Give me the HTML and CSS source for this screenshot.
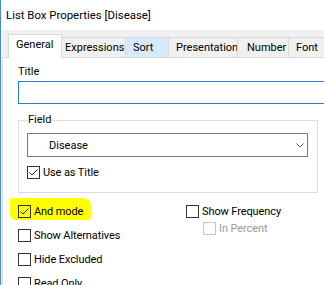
FILE: index.html
```html
<!DOCTYPE html>
<html lang="en">
<head>
    <meta charset="UTF-8">
    <meta name="viewport" content="width=device-width, initial-scale=1.0">
    <title>List Box Properties [Disease]</title>
    <link rel="stylesheet" href="styles.css">
</head>
<body>
    <div class="window">
        <div class="titlebar">List Box Properties [Disease]</div>

        <div class="tabs">
            <div class="tab active">General</div>
            <div class="tab tab-expr">Expressions</div>
            <div class="tab tab-sort hover">Sort</div>
            <div class="tab tab-pres">Presentation</div>
            <div class="tab tab-num">Number</div>
            <div class="tab tab-font">Font</div>
        </div>

        <div class="panel">
            <div class="label">Title</div>
            <div class="textbox"></div>

            <fieldset class="group">
                <legend>Field</legend>
                <div class="select">
                    <span>Disease</span>
                    <svg width="8" height="5" viewBox="0 0 8 5"><path d="M0.5 0.5 L4 4 L7.5 0.5" fill="none" stroke="#555"/></svg>
                </div>
                <div class="check use-title">
                    <span class="box"><svg width="11" height="11" viewBox="0 0 11 11"><path d="M1.5 5.5 L4 8 L9.5 2.5" fill="none" stroke="#222"/></svg></span>
                    Use as Title
                </div>
            </fieldset>

            <div class="options">
                <div class="col col-left">
                    <div class="check hl">
                        <span class="box"><svg width="11" height="11" viewBox="0 0 11 11"><path d="M1.5 5.5 L4 8 L9.5 2.5" fill="none" stroke="#222"/></svg></span>
                        And mode
                    </div>
                    <div class="check"><span class="box"></span>Show Alternatives</div>
                    <div class="check"><span class="box"></span>Hide Excluded</div>
                    <div class="check"><span class="box"></span>Read Only</div>
                </div>
                <div class="col col-right">
                    <div class="check"><span class="box"></span>Show Frequency</div>
                    <div class="check sub disabled"><span class="box"></span>In Percent</div>
                </div>
            </div>
        </div>
    </div>
</body>
</html>
```

FILE: styles.css
```css
* {
    box-sizing: border-box;
}
body {
    margin: 0;
    width: 324px;
    height: 285px;
    overflow: hidden;
    background-color: #f0f0f0;
    font-family: Roboto, "Segoe UI", sans-serif;
    font-size: 11px;
    color: #000;
}
.window {
    height: 285px;
    border-left: 1px solid #4a8bd0;
}
.titlebar {
    height: 30px;
    background-color: #fff;
    padding: 8px 0 0 5px;
    font-size: 11.4px;
    line-height: 15px;
}
.tabs {
    display: flex;
    align-items: flex-end;
    height: 27px;
    padding-left: 7px;
}
.tab {
    flex: none;
    height: 20px;
    margin-left: -1px;
    padding-left: 7px;
    border: 1px solid #d9d9d9;
    border-bottom: none;
    background-color: #f0f0f0;
    line-height: 19px;
    white-space: nowrap;
}
.tab.active {
    width: 54px;
    height: 24px;
    margin-left: 0;
    margin-bottom: -1px;
    background-color: #fff;
    line-height: 20px;
    position: relative;
    z-index: 1;
}
.tab.hover {
    background-color: #d8eaf9;
    border-color: #c5def5;
}
.tab-expr { width: 65px; padding-left: 3px; }
.tab-sort { width: 44px; }
.tab-pres { width: 70px; }
.tab-num { width: 52px; padding-left: 9px; }
.tab-font { width: 50px; }
.panel {
    height: 228px;
    margin-left: 1px;
    padding: 7px 0 0 15px;
    background-color: #fff;
    border-top: 1px solid #d9d9d9;
    border-left: 1px solid #d9d9d9;
}
.label {
    line-height: 14px;
}
.textbox {
    width: 320px;
    height: 23px;
    margin-top: 2px;
    border: 1px solid #2b7cd3;
}
.group {
    width: 300px;
    min-width: 0;
    margin: 9px 0 0 0;
    padding: 0 8px 13px 8px;
    border: 1px solid #dcdcdc;
}
.group legend {
    padding: 0 1px;
    line-height: 14px;
}
.select {
    display: flex;
    align-items: center;
    justify-content: space-between;
    width: 281px;
    height: 24px;
    margin-top: 6px;
    padding: 0 3px 0 21px;
    border: 1px solid #7a7a7a;
}
.check {
    display: flex;
    align-items: center;
    gap: 3px;
    height: 13px;
    line-height: 13px;
    white-space: nowrap;
    letter-spacing: -0.1px;
}
.use-title {
    margin-top: 9px;
}
.box {
    display: flex;
    align-items: center;
    justify-content: center;
    flex: none;
    width: 13px;
    height: 13px;
    border: 1px solid #333;
    background-color: #fff;
}
.options {
    display: flex;
    margin-top: 12px;
}
.col {
    display: flex;
    flex-direction: column;
}
.col-left {
    width: 168px;
    gap: 11px;
}
.col-right {
    gap: 4px;
}
.hl {
    align-self: flex-start;
    height: 22px;
    margin: -7px -8px -2px -8px;
    padding: 7px 8px 2px 8px;
    background-color: #ffff00;
    border-radius: 2px 8px 3px 6px;
}
.hl .box {
    background-color: transparent;
}
.sub {
    margin-left: 17px;
}
.disabled {
    color: #9a9a9a;
}
.disabled .box {
    border-color: #c4c4c4;
}
```
